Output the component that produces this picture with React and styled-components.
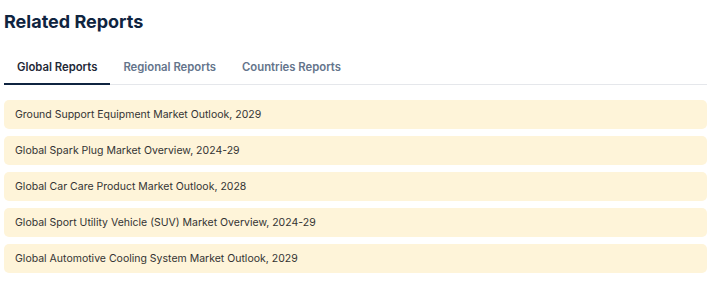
import React, { useState } from "react";
import styled, { createGlobalStyle } from "styled-components";

const GlobalStyle = createGlobalStyle`
  body {
    margin: 0;
    background: #ffffff;
    font-family: Inter, "Noto Sans", sans-serif;
  }
`;

const Section = styled.section`
  width: 703px;
  padding: 8px 0 0 4px;
`;

const Heading = styled.h2`
  margin: 0;
  font-size: 18px;
  line-height: 28px;
  font-weight: 700;
  color: #0f2440;
`;

const TabBar = styled.div`
  display: flex;
  margin-top: 14px;
  border-bottom: 1px solid #e5e7eb;
`;

const Tab = styled.button`
  border: 0;
  background: none;
  padding: 0 13px;
  height: 35px;
  font-family: inherit;
  font-size: 11.3px;
  font-weight: 600;
  color: ${(p) => (p.$active ? "#1f2937" : "#64748b")};
  border-bottom: 2px solid ${(p) => (p.$active ? "#0f2440" : "transparent")};
  margin-bottom: -1px;
  cursor: pointer;
`;

const List = styled.ul`
  list-style: none;
  margin: 15px 0 0;
  padding: 0;
  display: flex;
  flex-direction: column;
  gap: 7px;
`;

const Item = styled.li`
  height: 29px;
  display: flex;
  align-items: center;
  padding: 0 11px;
  background: #fef4d9;
  border-radius: 5px;
  font-size: 10.5px;
  color: #333333;
`;

const tabs = ["Global Reports", "Regional Reports", "Countries Reports"];

const reports = [
  "Ground Support Equipment Market Outlook, 2029",
  "Global Spark Plug Market Overview, 2024-29",
  "Global Car Care Product Market Outlook, 2028",
  "Global Sport Utility Vehicle (SUV) Market Overview, 2024-29",
  "Global Automotive Cooling System Market Outlook, 2029",
];

export default function App() {
  const [active, setActive] = useState(0);
  return (
    <>
      <GlobalStyle />
      <Section>
        <Heading>Related Reports</Heading>
        <TabBar>
          {tabs.map((t, i) => (
            <Tab key={t} $active={i === active} onClick={() => setActive(i)}>
              {t}
            </Tab>
          ))}
        </TabBar>
        <List>
          {reports.map((r) => (
            <Item key={r}>{r}</Item>
          ))}
        </List>
      </Section>
    </>
  );
}
